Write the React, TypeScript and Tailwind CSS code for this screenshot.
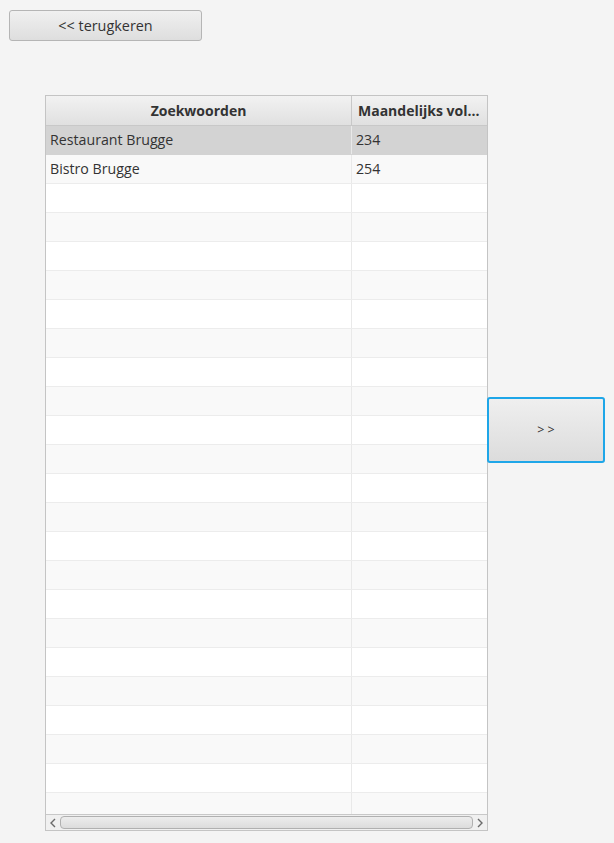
import React from 'react';

const rows: [string, string][] = [
  ['Restaurant Brugge', '234'],
  ['Bistro Brugge', '254'],
];

const font = { fontFamily: '"Open Sans", "Noto Sans", Arial, sans-serif' };

export default function App() {
  const filled = Array.from({ length: 24 }, (_, i) => rows[i] ?? ['', '']);

  return (
    <div className="h-[843px] w-[614px] overflow-hidden bg-[#f4f4f4] text-[#333]" style={font}>
      <div className="pl-[9px] pt-[10px]">
        <button className="flex h-[31px] w-[193px] items-center justify-center rounded-[3px] border border-[#b5b5b5] bg-gradient-to-b from-[#f0f0f0] to-[#dedede] text-[14.4px] text-[#333]">
          &lt;&lt; terugkeren
        </button>
      </div>

      <div className="mt-[54px] flex items-start pl-[45px]">
        <div className="flex h-[736px] w-[443px] flex-col border border-[#c4c4c4] bg-white">
          <div className="flex h-[30px] shrink-0 border-b border-[#c8c8c8] bg-gradient-to-b from-[#f2f2f2] to-[#e0e0e0] text-[14px] font-bold text-[#333]">
            <div className="flex w-[306px] items-center justify-center border-r border-[#c8c8c8]">
              Zoekwoorden
            </div>
            <div className="flex flex-1 items-center pl-[6px]">Maandelijks vol...</div>
          </div>

          <div className="h-[688px] overflow-hidden">
            {filled.map(([name, volume], i) => (
              <div
                key={i}
                className={`flex h-[29px] border-b text-[14.2px] ${
                  i === 0
                    ? 'border-[#d3d3d3] bg-[#d3d3d3]'
                    : i % 2 === 1
                      ? 'border-[#ececec] bg-[#f9f9f9]'
                      : 'border-[#ececec] bg-white'
                }`}
              >
                <div className="flex w-[306px] items-center border-r border-[#e9e9e9] pl-[4px]">
                  {name}
                </div>
                <div className="flex flex-1 items-center pl-[4px]">{volume}</div>
              </div>
            ))}
          </div>

          <div className="flex h-[16px] shrink-0 items-center border-t border-[#c8c8c8] bg-[#f0f0f0]">
            <div className="flex w-[14px] items-center justify-center">
              <svg width="6" height="10" viewBox="0 0 6 10">
                <path d="M5 1 L1 5 L5 9" fill="none" stroke="#6a6a6a" strokeWidth="1.4" />
              </svg>
            </div>
            <div className="h-[13px] flex-1 rounded-[4px] border border-[#b0b0b0] bg-gradient-to-b from-[#ededed] to-[#dcdcdc]" />
            <div className="flex w-[14px] items-center justify-center">
              <svg width="6" height="10" viewBox="0 0 6 10">
                <path d="M1 1 L5 5 L1 9" fill="none" stroke="#6a6a6a" strokeWidth="1.4" />
              </svg>
            </div>
          </div>
        </div>

        <button className="mt-[302px] -ml-[1px] flex h-[66px] w-[118px] items-center justify-center rounded-[3px] border-2 border-[#1ea6e8] bg-gradient-to-b from-[#efefef] to-[#dcdcdc] text-[12.5px] text-[#333]">
          &gt; &gt;
        </button>
      </div>
    </div>
  );
}
